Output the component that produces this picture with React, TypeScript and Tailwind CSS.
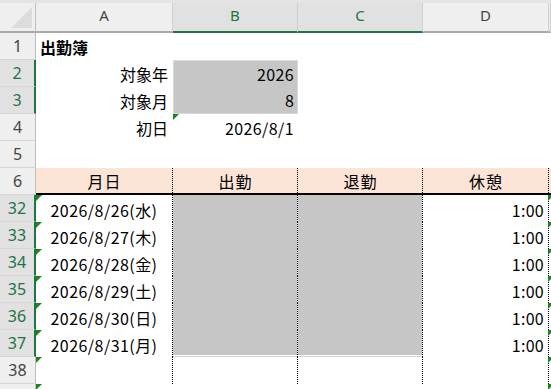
import React from 'react';

const dates = [
  '2026/8/26(水)',
  '2026/8/27(木)',
  '2026/8/28(金)',
  '2026/8/29(土)',
  '2026/8/30(日)',
  '2026/8/31(月)',
];

// green error indicator in the top-left corner of a cell
const Tri = ({ className = 'left-0' }: { className?: string }) => (
  <svg className={`absolute top-0 ${className}`} width="6" height="6" viewBox="0 0 6 6">
    <polygon points="0,0 6,0 0,6" fill="#1b861b" />
  </svg>
);

const ColHead = ({ label, sel }: { label: string; sel?: boolean }) => (
  <div className="flex flex-col">
    <div className="h-[3px] bg-[#e4e4e4]" />
    <div
      className={`flex flex-1 items-center justify-center pb-[3px] border-r border-r-[#cfcfcf] border-b-2 ${
        sel ? 'bg-[#e1e1e1] text-[#217346] border-b-[#217346]' : 'bg-[#efefef] text-[#444] border-b-[#a9a9a9]'
      }`}
    >
      {label}
    </div>
  </div>
);

const RowHead = ({ n, sel }: { n?: number; sel?: boolean }) => (
  <div
    className={`flex items-center justify-center text-[16px] border-b border-b-[#d6d6d6] ${
      sel ? 'bg-[#e1e1e1] text-[#217346] border-r-2 border-r-[#217346]' : 'bg-[#efefef] text-[#444] border-r border-r-[#bdbdbd]'
    }`}
  >
    {n}
  </div>
);

const cell = "font-['Noto_Sans_CJK_JP',sans-serif] text-[16px] text-black";
const dot = 'border-r border-dotted border-r-black';

const App: React.FC = () => {
  return (
    <div className="h-[389px] w-[551px] overflow-hidden bg-white">
      <div className="grid grid-cols-[36px_137px_125px_125px_126px_1fr] grid-rows-[33px_repeat(14,27px)] font-['Noto_Sans','Liberation_Sans',sans-serif] text-[15px]">
        {/* Column headers */}
        <div className="flex flex-col">
          <div className="h-[3px] bg-[#e4e4e4]" />
          <div className="flex-1 border-r border-r-[#bdbdbd] border-b-2 border-b-[#a9a9a9] bg-[#efefef]">
            <svg width="35" height="28" viewBox="0 0 35 28">
              <polygon points="11,25 32,25 32,4" fill="#dcdcdc" />
            </svg>
          </div>
        </div>
        <ColHead label="A" />
        <ColHead label="B" sel />
        <ColHead label="C" sel />
        <ColHead label="D" />
        <ColHead label="" />

        {/* Row 1 */}
        <RowHead n={1} />
        <div className={`${cell} flex items-center pl-[4px] font-bold`}>出勤簿</div>
        <div />
        <div />
        <div />
        <div />

        {/* Row 2 */}
        <RowHead n={2} sel />
        <div className={`${cell} flex items-center justify-end pr-[5px]`}>対象年</div>
        <div className={`${cell} flex items-center justify-end pr-[3px] bg-[#c6c6c6] border-t border-x border-[#d9d9d9] tracking-[0.4px]`}>2026</div>
        <div />
        <div />
        <div />

        {/* Row 3 */}
        <RowHead n={3} sel />
        <div className={`${cell} flex items-center justify-end pr-[5px]`}>対象月</div>
        <div className={`${cell} flex items-center justify-end pr-[3px] bg-[#c6c6c6] border-b border-x border-[#d9d9d9]`}>8</div>
        <div />
        <div />
        <div />

        {/* Row 4 */}
        <RowHead n={4} />
        <div className={`${cell} flex items-center justify-end pr-[5px]`}>初日</div>
        <div className={`${cell} relative flex items-center justify-end pr-[4px] tracking-[0.4px]`}>
          <Tri />
          2026/8/1
        </div>
        <div />
        <div />
        <div />

        {/* Row 5 */}
        <RowHead n={5} />
        <div />
        <div />
        <div />
        <div />
        <div />

        {/* Row 6: table header */}
        <RowHead n={6} />
        {['月日', '出勤', '退勤', '休憩'].map((h) => (
          <div key={h} className={`${cell} relative flex items-center justify-center bg-[#fce4d6] tracking-[1px]`}>
            <div className="absolute right-0 top-0 bottom-0 border-r border-dotted border-r-black" />
            <span className="pb-[2px]">{h}</span>
            <div className="absolute left-0 right-0 bottom-0 h-[2px] bg-black" />
          </div>
        ))}
        <div className="relative bg-[#fce4d6]">
          <div className="absolute left-0 right-0 bottom-0 h-[2px] bg-black" />
        </div>

        {/* Rows 32-37 */}
        {dates.map((d, i) => {
          const last = i === dates.length - 1;
          return (
            <React.Fragment key={d}>
              <RowHead n={32 + i} sel />
              <div className={`${cell} ${dot} relative flex items-center justify-center pt-[2px] tracking-[0.45px]`}>
                <Tri />
                {d}
              </div>
              {[0, 1].map((k) => (
                <div key={k} className={`${dot} flex flex-col`}>
                  <div className="flex-1 bg-[#c6c6c6]" />
                  {last && (
                    <>
                      <div className="h-px bg-white" />
                      <div className="h-px bg-[#d4d4d4]" />
                    </>
                  )}
                </div>
              ))}
              <div className={`${cell} ${dot} flex items-center justify-end pr-[4px] pt-[2px] tracking-[0.3px]`}>1:00</div>
              <div className="relative">
                <Tri className="-left-px" />
              </div>
            </React.Fragment>
          );
        })}

        {/* Row 38 */}
        <RowHead n={38} />
        <div className={`${dot} relative`}>
          <Tri />
        </div>
        <div className={dot} />
        <div className={dot} />
        <div className={dot} />
        <div className="relative">
          <Tri className="-left-px" />
        </div>

        {/* Row 39 (only its top edge is visible) */}
        <RowHead />
        <div className="relative">
          <Tri />
        </div>
        <div />
        <div />
        <div />
        <div className="relative">
          <Tri className="-left-px" />
        </div>
      </div>
    </div>
  );
};

export default App;
